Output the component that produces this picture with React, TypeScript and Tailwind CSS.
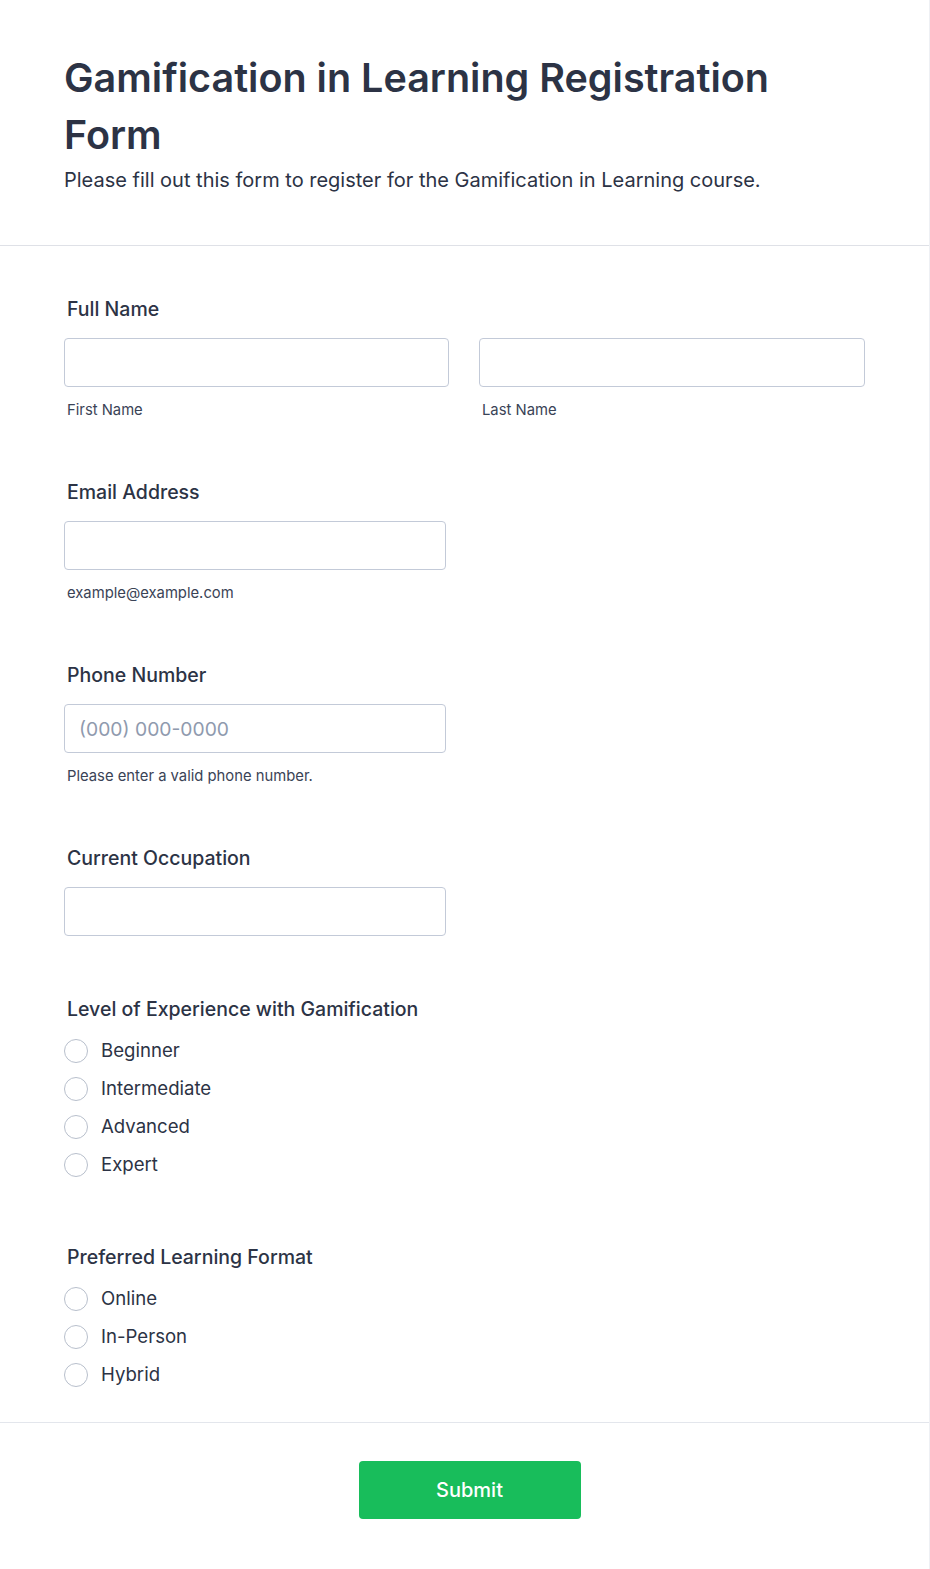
const font = { fontFamily: "Inter, 'Noto Sans', sans-serif" };

function Label({ children }: { children: React.ReactNode }) {
  return <div className="pl-[3px] text-[19.5px] leading-6 font-medium text-[#2c3345]">{children}</div>;
}

function Input({ placeholder, className = "" }: { placeholder?: string; className?: string }) {
  return (
    <input
      type="text"
      placeholder={placeholder}
      className={`mt-[17px] h-[49px] rounded-[4px] border border-[#c3cad8] bg-white px-[14px] text-[19.3px] text-[#2c3345] outline-none placeholder:text-[#8f9aae] ${className}`}
    />
  );
}

function Sub({ children }: { children: React.ReactNode }) {
  return <div className="mt-[13px] pl-[3px] text-[14.8px] leading-5 text-[#3a4356]">{children}</div>;
}

function Radio({ label, name }: { label: string; name: string }) {
  return (
    <label className="flex h-[38px] items-center gap-[13px]">
      <input type="radio" name={name} className="peer sr-only" />
      <span className="h-6 w-6 rounded-full border border-[#b8bfcc] bg-white" />
      <span className="text-[18.6px] text-[#2c3345]">{label}</span>
    </label>
  );
}

export default function App() {
  return (
    <div style={font} className="min-h-screen border-r border-[#eef0f4] bg-white">
      <div className="border-b border-[#dfe1e7] px-16 pt-[50px] pb-[53px]">
        <h1 className="text-[39.5px] leading-[57px] font-semibold text-[#2c3345]">
          Gamification in Learning Registration Form
        </h1>
        <p className="mt-1 text-[20px] leading-6 text-[#2c3345]">
          Please fill out this form to register for the Gamification in Learning course.
        </p>
      </div>

      <div className="flex flex-col border-b border-[#e3e6ec] px-16 pt-[51px] pb-[28px]">
        <Label>Full Name</Label>
        <div className="flex gap-[30px]">
          <div className="flex w-[385px] flex-col">
            <Input />
            <Sub>First Name</Sub>
          </div>
          <div className="flex w-[386px] flex-col">
            <Input />
            <Sub>Last Name</Sub>
          </div>
        </div>

        <div className="mt-[60px]">
          <Label>Email Address</Label>
        </div>
        <Input className="w-[382px]" />
        <Sub>example@example.com</Sub>

        <div className="mt-[60px]">
          <Label>Phone Number</Label>
        </div>
        <Input className="w-[382px]" placeholder="(000) 000-0000" />
        <Sub>Please enter a valid phone number.</Sub>

        <div className="mt-[60px]">
          <Label>Current Occupation</Label>
        </div>
        <Input className="w-[382px]" />

        <div className="mt-[61px]">
          <Label>Level of Experience with Gamification</Label>
        </div>
        <div className="mt-[11px] flex flex-col">
          {["Beginner", "Intermediate", "Advanced", "Expert"].map((o) => (
            <Radio key={o} label={o} name="level" />
          ))}
        </div>

        <div className="mt-[61px]">
          <Label>Preferred Learning Format</Label>
        </div>
        <div className="mt-[11px] flex flex-col">
          {["Online", "In-Person", "Hybrid"].map((o) => (
            <Radio key={o} label={o} name="format" />
          ))}
        </div>
      </div>

      <div className="flex justify-center pt-[38px] pb-[51px]">
        <button className="ml-[10px] h-[58px] w-[222px] rounded-[4px] bg-[#18bd5b] text-[20px] font-medium text-white">
          Submit
        </button>
      </div>
    </div>
  );
}
